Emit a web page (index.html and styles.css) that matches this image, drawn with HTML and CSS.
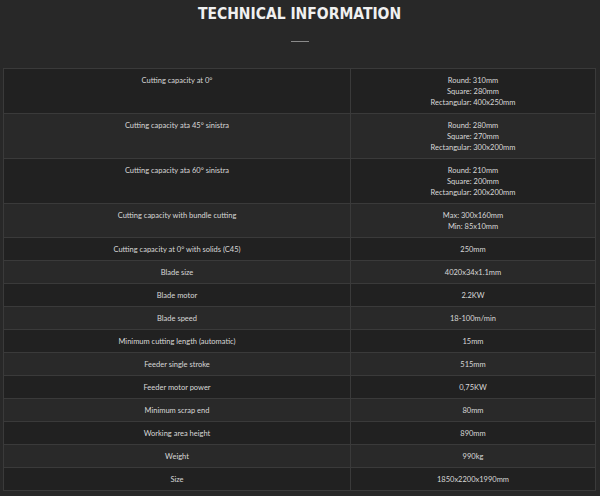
FILE: index.html
```html
<!DOCTYPE html>
<html>
<head>
<meta charset="utf-8">
<link rel="stylesheet" href="styles.css">
</head>
<body>
<div class="page">
  <h2 class="title">TECHNICAL INFORMATION</h2>
  <div class="rule"></div>
  <table class="specs">
    <tr><td>Cutting capacity at 0°</td><td>Round: 310mm<br>Square: 280mm<br>Rectangular: 400x250mm</td></tr>
    <tr><td>Cutting capacity ata 45° sinistra</td><td>Round: 280mm<br>Square: 270mm<br>Rectangular: 300x200mm</td></tr>
    <tr><td>Cutting capacity ata 60° sinistra</td><td>Round: 210mm<br>Square: 200mm<br>Rectangular: 200x200mm</td></tr>
    <tr><td>Cutting capacity with bundle cutting</td><td>Max: 300x160mm<br>Min: 85x10mm</td></tr>
    <tr><td>Cutting capacity at 0° with solids (C45)</td><td>250mm</td></tr>
    <tr><td>Blade size</td><td>4020x34x1.1mm</td></tr>
    <tr><td>Blade motor</td><td>2.2KW</td></tr>
    <tr><td>Blade speed</td><td>18-100m/min</td></tr>
    <tr><td>Minimum cutting length (automatic)</td><td>15mm</td></tr>
    <tr><td>Feeder single stroke</td><td>515mm</td></tr>
    <tr><td>Feeder motor power</td><td>0,75KW</td></tr>
    <tr><td>Minimum scrap end</td><td>80mm</td></tr>
    <tr><td>Working area height</td><td>890mm</td></tr>
    <tr><td>Weight</td><td>990kg</td></tr>
    <tr><td>Size</td><td>1850x2200x1990mm</td></tr>
  </table>
</div>
</body>
</html>
```

FILE: styles.css
```css
html, body {
  margin: 0;
  padding: 0;
  background: #282828;
}
.page {
  padding: 5px 4px 0 3px;
}
.title {
  margin: 0;
  text-align: center;
  font-family: "DejaVu Sans", sans-serif;
  font-stretch: condensed;
  font-weight: bold;
  font-size: 15.5px;
  line-height: 18px;
  color: #f0f0f0;
}
.rule {
  width: 18px;
  height: 1px;
  background: #8a8a8a;
  margin: 18px auto 26px;
}
.specs {
  width: 100%;
  border-collapse: collapse;
  border: 1px solid #3a3a3a;
  font-family: Lato, "Open Sans", sans-serif;
  font-size: 7.5px;
  line-height: 11px;
  color: #d8d8d8;
}
.specs td {
  border: 1px solid #3a3a3a;
  padding: 6px 4px 5px;
  text-align: center;
  vertical-align: top;
}
.specs td:first-child {
  width: 338px;
}
.specs tr:nth-child(odd) {
  background: #212121;
}
.specs tr:nth-child(even) {
  background: #292929;
}
```
